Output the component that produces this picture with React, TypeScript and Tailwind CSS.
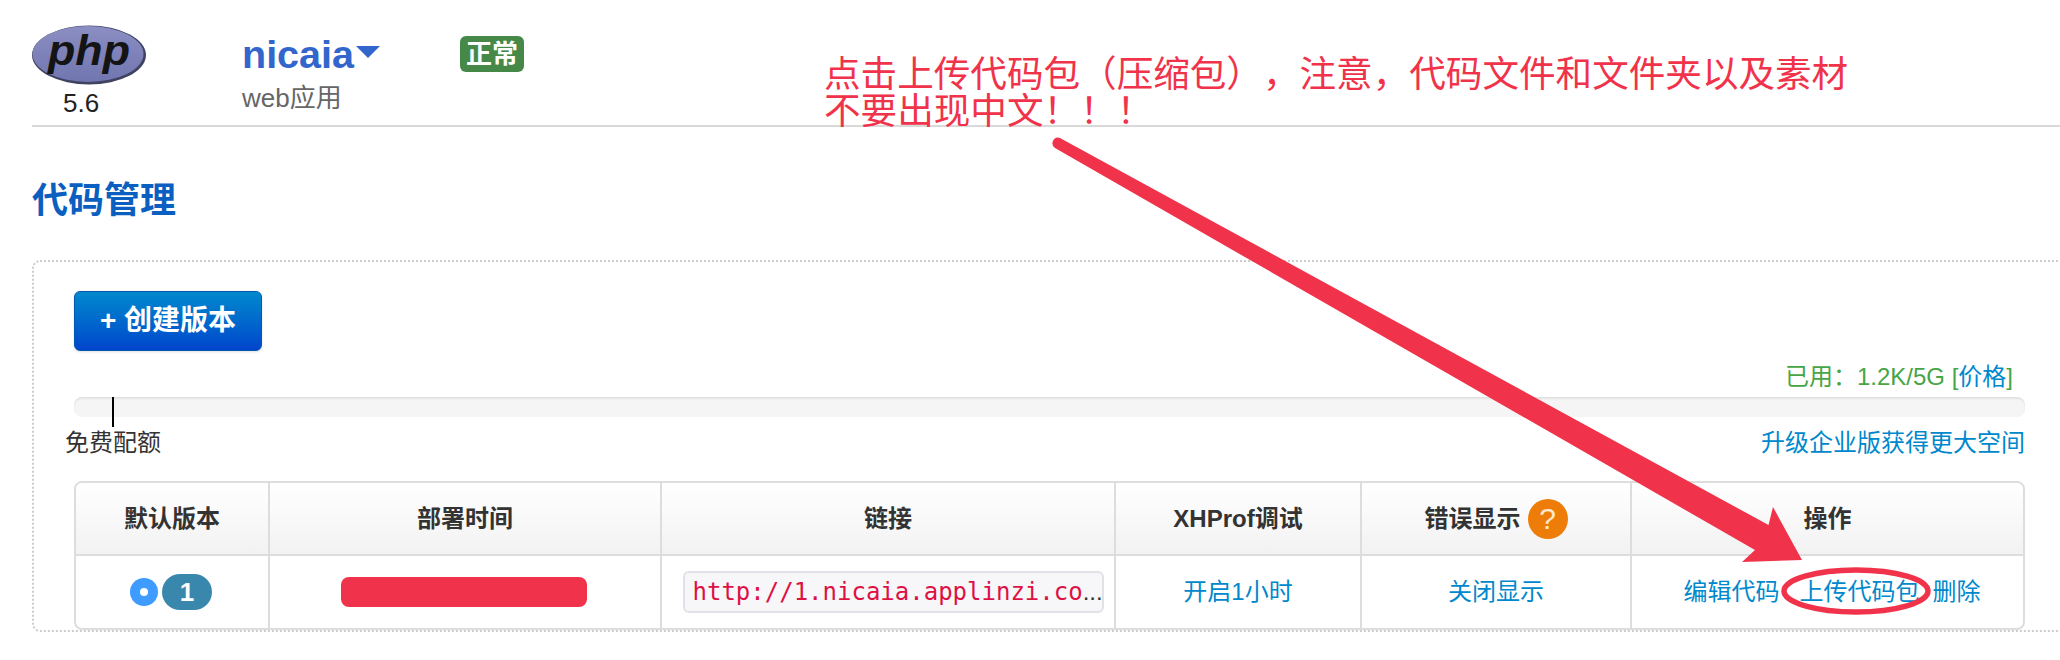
const sans = "font-['Liberation_Sans','Noto_Sans_CJK_SC',sans-serif]";

const columns = "grid grid-cols-[194px_392px_454px_246px_270px_391px]";

const PhpLogo = () => (
  <svg width="114" height="60" viewBox="0 0 114 60" className="block">
    <defs>
      <linearGradient id="php-fill" x1="0" y1="0" x2="0" y2="1">
        <stop offset="0" stopColor="#8a8ec2" />
        <stop offset="1" stopColor="#7276b0" />
      </linearGradient>
    </defs>
    <ellipse cx="57" cy="30" rx="57" ry="29.5" fill="#3f4260" />
    <ellipse cx="56" cy="29" rx="55.5" ry="28" fill="url(#php-fill)" />
    <text
      x="16"
      y="40"
      textLength="82"
      lengthAdjust="spacingAndGlyphs"
      fontFamily="Liberation Sans, sans-serif"
      fontWeight="700"
      fontStyle="italic"
      fontSize="43"
      fill="#141414"
    >
      php
    </text>
  </svg>
);

const Header = () => (
  <header className="ml-8 flex h-[127px] border-b-2 border-[#d9d9d9]">
    <div className="w-[210px] pt-[25px]">
      <PhpLogo />
      <p className="ml-[31px] mt-[3px] text-[26px] leading-[30px] text-[#222]">5.6</p>
    </div>
    <div className="w-[218px] pt-[33px]">
      <div className="flex items-start">
        <span className="text-[39.5px] font-bold leading-[42px] text-[#3366cc]">nicaia</span>
        <span className="ml-[2px] mt-[13px] h-0 w-0 border-x-[12px] border-t-[12px] border-x-transparent border-t-[#3366cc]" />
      </div>
      <p className="mt-[8px] text-[26px] leading-[30px] text-[#666]">web应用</p>
    </div>
    <div className="pt-[36px]">
      <span className="flex h-9 w-16 items-center justify-center rounded-md bg-[#468847] text-[26px] font-bold text-white">
        正常
      </span>
    </div>
  </header>
);

const HeadCell = ({ children, last }: { children: React.ReactNode; last?: boolean }) => (
  <div
    className={`flex h-[71px] items-center justify-center bg-gradient-to-b from-white to-[#f2f2f2] text-2xl font-bold text-[#333] ${
      last ? "" : "border-r-2 border-[#ddd]"
    }`}
  >
    {children}
  </div>
);

const BodyCell = ({ children, last }: { children: React.ReactNode; last?: boolean }) => (
  <div
    className={`flex h-[72px] items-center justify-center text-2xl text-[#0088cc] ${
      last ? "" : "border-r-2 border-[#ddd]"
    }`}
  >
    {children}
  </div>
);

const VersionTable = () => (
  <div className="mt-[26px] w-[1951px] overflow-hidden rounded-lg border-2 border-[#ddd]">
    <div className={`${columns} border-b-2 border-[#ddd]`}>
      <HeadCell>默认版本</HeadCell>
      <HeadCell>部署时间</HeadCell>
      <HeadCell>链接</HeadCell>
      <HeadCell>XHProf调试</HeadCell>
      <HeadCell>
        <span>错误显示</span>
        <span className="ml-[7px] flex h-10 w-10 items-center justify-center rounded-full bg-[#ee7c08] text-[30px] font-normal text-[#ffe9cf]">
          ?
        </span>
      </HeadCell>
      <HeadCell last>操作</HeadCell>
    </div>
    <div className={columns}>
      <BodyCell>
        <span className="-ml-[2px] flex h-7 w-7 items-center justify-center rounded-full bg-[#3e9bff]">
          <span className="h-2 w-2 rounded-full bg-white" />
        </span>
        <span className="ml-1 flex h-9 w-[50px] items-center justify-center rounded-full bg-[#3a87ad] text-[26px] font-bold text-white">
          1
        </span>
      </BodyCell>
      <BodyCell>
        <span className="-ml-[2px] h-[30px] w-[246px] rounded-lg bg-[#f0334a]" />
      </BodyCell>
      <BodyCell>
        <div className="ml-[10px] flex h-[42px] w-[421px] items-center rounded-md border-2 border-[#e1e1e8] bg-[#f7f7f9] pl-2 text-2xl text-[#333]">
          <span className="font-['DejaVu_Sans_Mono',monospace] text-[#dd1144]">http://1.nicaia.applinzi.co</span>
          <span>...</span>
        </div>
      </BodyCell>
      <BodyCell>开启1小时</BodyCell>
      <BodyCell>关闭显示</BodyCell>
      <BodyCell last>
        <div className="ml-[9px] flex">
          <a>编辑代码</a>
          <a className="ml-5">上传代码包</a>
          <a className="ml-[13px]">删除</a>
        </div>
      </BodyCell>
    </div>
  </div>
);

const Annotation = () => (
  <>
    <svg width="2060" height="660" viewBox="0 0 2060 660" className="pointer-events-none absolute left-0 top-0">
      <path
        d="M1802 560 L1773 507 L1768.5 525 L1060 138 Q1055 136 1053 141 Q1051 145 1055 148 L1755 550 L1742 562 Z"
        fill="#f0334a"
      />
      <ellipse cx="1856" cy="591" rx="72" ry="21" fill="none" stroke="#f0334a" strokeWidth="5.5" />
    </svg>
    <p className="absolute left-[824px] top-[56px] whitespace-nowrap text-[36.6px] leading-[37px] text-[#f0334a] [text-spacing-trim:space-all]">
      点击上传代码包（压缩包），注意，代码文件和文件夹以及素材
      <br />
      不要出现中文！！！
    </p>
  </>
);

export default function App() {
  return (
    <div className={`relative h-[660px] w-[2060px] overflow-hidden bg-white ${sans}`}>
      <Header />
      <h2 className="ml-8 mt-[56px] text-4xl leading-9 font-bold text-[#0a5fc0]">代码管理</h2>
      <section className="ml-8 mt-[41px] w-[2100px] rounded-lg border-2 border-dotted border-[#ccc] pl-10 pt-[29px]">
        <button className="h-[60px] w-[188px] rounded-md border border-[#0058b0] bg-gradient-to-b from-[#0088cc] to-[#0044cc] text-[28px] font-bold text-white shadow-sm">
          + 创建版本
        </button>
        <div className="w-[1951px]">
          <p className="mt-[14px] pr-3 text-right text-2xl leading-6 text-[#46a546]">
            已用：1.2K/5G [<a className="text-[#0088cc]">价格</a>]
          </p>
          <div className="relative mt-2 h-5 rounded-lg bg-[#f5f5f5] shadow-[inset_0_2px_2px_rgba(0,0,0,0.08)]">
            <span className="absolute left-[38px] top-0 h-[30px] w-0.5 bg-black" />
          </div>
          <div className="mt-[14px] flex justify-between text-2xl leading-6">
            <span className="-ml-[9px] text-[#333]">免费配额</span>
            <a className="text-[#0088cc]">升级企业版获得更大空间</a>
          </div>
          <VersionTable />
        </div>
      </section>
      <Annotation />
    </div>
  );
}
